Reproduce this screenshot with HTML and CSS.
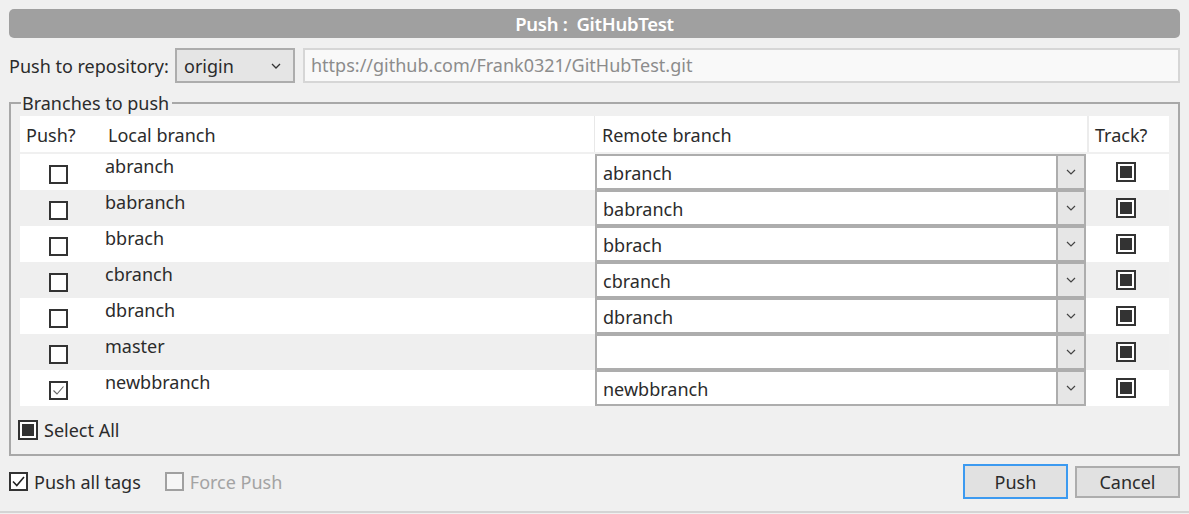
FILE: index.html
```html
<!DOCTYPE html>
<html>
<head>
<meta charset="utf-8">
<link rel="stylesheet" href="styles.css">
</head>
<body>
<div class="window">
  <div class="titlebar">Push :&nbsp; GitHubTest</div>
  <div class="repo-row">
    <span class="label">Push to repository:</span>
    <div class="combo repo-combo">
      <span class="combo-text">origin</span>
      <svg class="chev" width="10" height="6" viewBox="0 0 10 6"><polyline points="1,1 5,5 9,1" fill="none" stroke="#333" stroke-width="1.3"/></svg>
    </div>
    <div class="url">https://github.com/Frank0321/GitHubTest.git</div>
  </div>
  <fieldset class="group">
    <legend>Branches to push</legend>
    <div class="table">
      <div class="row head">
        <div class="cell c-push">Push?</div>
        <div class="cell c-local">Local branch</div>
        <div class="cell c-remote">Remote branch</div>
        <div class="cell c-track">Track?</div>
      </div>
      <div class="row odd">
        <div class="cell c-push"><span class="cb"></span></div>
        <div class="cell c-local">abranch</div>
        <div class="cell c-remote"><div class="rcombo"><span class="rtext">abranch</span><span class="rbtn"><svg width="10" height="6" viewBox="0 0 10 6"><polyline points="1,1 5,5 9,1" fill="none" stroke="#444" stroke-width="1.2"/></svg></span></div></div>
        <div class="cell c-track"><span class="cb ind"></span></div>
      </div>
      <div class="row even">
        <div class="cell c-push"><span class="cb"></span></div>
        <div class="cell c-local">babranch</div>
        <div class="cell c-remote"><div class="rcombo"><span class="rtext">babranch</span><span class="rbtn"><svg width="10" height="6" viewBox="0 0 10 6"><polyline points="1,1 5,5 9,1" fill="none" stroke="#444" stroke-width="1.2"/></svg></span></div></div>
        <div class="cell c-track"><span class="cb ind"></span></div>
      </div>
      <div class="row odd">
        <div class="cell c-push"><span class="cb"></span></div>
        <div class="cell c-local">bbrach</div>
        <div class="cell c-remote"><div class="rcombo"><span class="rtext">bbrach</span><span class="rbtn"><svg width="10" height="6" viewBox="0 0 10 6"><polyline points="1,1 5,5 9,1" fill="none" stroke="#444" stroke-width="1.2"/></svg></span></div></div>
        <div class="cell c-track"><span class="cb ind"></span></div>
      </div>
      <div class="row even">
        <div class="cell c-push"><span class="cb"></span></div>
        <div class="cell c-local">cbranch</div>
        <div class="cell c-remote"><div class="rcombo"><span class="rtext">cbranch</span><span class="rbtn"><svg width="10" height="6" viewBox="0 0 10 6"><polyline points="1,1 5,5 9,1" fill="none" stroke="#444" stroke-width="1.2"/></svg></span></div></div>
        <div class="cell c-track"><span class="cb ind"></span></div>
      </div>
      <div class="row odd">
        <div class="cell c-push"><span class="cb"></span></div>
        <div class="cell c-local">dbranch</div>
        <div class="cell c-remote"><div class="rcombo"><span class="rtext">dbranch</span><span class="rbtn"><svg width="10" height="6" viewBox="0 0 10 6"><polyline points="1,1 5,5 9,1" fill="none" stroke="#444" stroke-width="1.2"/></svg></span></div></div>
        <div class="cell c-track"><span class="cb ind"></span></div>
      </div>
      <div class="row even">
        <div class="cell c-push"><span class="cb"></span></div>
        <div class="cell c-local">master</div>
        <div class="cell c-remote"><div class="rcombo"><span class="rtext"></span><span class="rbtn"><svg width="10" height="6" viewBox="0 0 10 6"><polyline points="1,1 5,5 9,1" fill="none" stroke="#444" stroke-width="1.2"/></svg></span></div></div>
        <div class="cell c-track"><span class="cb ind"></span></div>
      </div>
      <div class="row odd">
        <div class="cell c-push"><span class="cb"><svg width="15" height="15" viewBox="0 0 15 15"><polyline points="2.5,7.5 6,11 12.5,3.5" fill="none" stroke="#666" stroke-width="1.1"/></svg></span></div>
        <div class="cell c-local">newbbranch</div>
        <div class="cell c-remote"><div class="rcombo"><span class="rtext">newbbranch</span><span class="rbtn"><svg width="10" height="6" viewBox="0 0 10 6"><polyline points="1,1 5,5 9,1" fill="none" stroke="#444" stroke-width="1.2"/></svg></span></div></div>
        <div class="cell c-track"><span class="cb ind"></span></div>
      </div>
    </div>
    <div class="select-all"><span class="cb ind"></span><span>Select All</span></div>
  </fieldset>
  <div class="footer">
    <div class="opt"><span class="cb"><svg width="15" height="15" viewBox="0 0 15 15"><polyline points="2,7.5 5.8,11.5 13,3" fill="none" stroke="#222" stroke-width="1.6"/></svg></span><span>Push all tags</span></div>
    <div class="opt disabled"><span class="cb"></span><span>Force Push</span></div>
    <div class="spacer"></div>
    <div class="btn primary">Push</div>
    <div class="btn">Cancel</div>
  </div>
</div>
</body>
</html>
```

FILE: styles.css
```css
html, body {
  margin: 0;
  padding: 0;
  background: #f0f0f0;
}
body {
  font-family: "Noto Sans", "Open Sans", sans-serif;
  font-size: 18px;
  color: #2b2b2b;
}
.window {
  width: 1189px;
  box-sizing: border-box;
  padding: 9px 9px 12px;
  border-bottom: 2px solid #d4d4d4;
}
.titlebar {
  height: 29px;
  background: #a0a0a0;
  border-radius: 5px;
  color: #fff;
  font-weight: 600;
  font-size: 18.5px;
  letter-spacing: -0.3px;
  line-height: 29px;
  text-align: center;
}
.repo-row {
  display: flex;
  align-items: center;
  margin-top: 10px;
  height: 35px;
}
.label {
  width: 166px;
  flex: none;
}
.combo {
  box-sizing: border-box;
  display: flex;
  align-items: center;
  height: 35px;
  border: 2px solid #adadad;
  background: #e5e5e5;
}
.repo-combo {
  width: 120px;
  padding: 0 12px 0 7px;
  justify-content: space-between;
}
.chev { display: block; }
.url {
  box-sizing: border-box;
  flex: 1;
  margin-left: 8px;
  height: 35px;
  border: 2px solid #d6d6d6;
  background: #f9f9f9;
  color: #8c8c8c;
  line-height: 31px;
  padding-left: 6px;
}
.group {
  margin: 9px 0 0;
  border: 2px solid #a8a8a8;
  padding: 0 9px 14px;
  min-width: 0;
}
.group legend {
  padding: 0 3px 0 1px;
  line-height: 22px;
  margin-left: 1px;
}
.table {
  margin-top: 2px;
}
.row {
  display: grid;
  grid-template-columns: 76px 498px 493px 82px;
  height: 36px;
}
.row.head {
  background: #fff;
  margin-bottom: 2px;
}
.row.odd { background: #fff; }
.row.even { background: #efefef; }
.cell {
  display: flex;
  align-items: center;
}
.head .cell { padding-top: 2px; }
.head .c-push { padding-left: 6px; }
.head .c-local { padding-left: 12px; }
.head .c-remote {
  padding-left: 7px;
  border-left: 1px solid #e8e8e8;
}
.head .c-track {
  padding-left: 6px;
  border-left: 2px solid #ececec;
}
.row .c-push { justify-content: center; }
.head .c-push { justify-content: flex-start; }
.row:not(.head) .c-local {
  align-items: flex-start;
  padding-left: 9px;
  line-height: 24px;
}
.row:not(.head) .c-track {
  justify-content: center;
  padding-right: 4px;
}
.cb {
  box-sizing: border-box;
  width: 19px;
  height: 19px;
  border: 2px solid #333;
  background: #fff;
  display: flex;
  align-items: center;
  justify-content: center;
  flex: none;
}
.c-push .cb { margin-top: 4px; margin-left: 1px; }
.cb.ind {
  width: 20px;
  height: 20px;
}
.cb.ind::after {
  content: "";
  width: 12px;
  height: 12px;
  background: #333;
}
.rcombo {
  box-sizing: border-box;
  margin-left: 1px;
  width: 491px;
  height: 36px;
  border: 2px solid #adadad;
  background: #fff;
  display: flex;
}
.rtext {
  flex: 1;
  padding-left: 6px;
  padding-top: 1px;
  line-height: 33px;
}
.rbtn {
  width: 26px;
  background: #e6e6e6;
  border-left: 2px solid #adadad;
  display: flex;
  align-items: center;
  justify-content: center;
}
.select-all {
  display: flex;
  align-items: center;
  gap: 6px;
  margin-top: 14px;
  margin-left: -2px;
  height: 20px;
}
.footer {
  display: flex;
  align-items: center;
  margin-top: 8px;
  height: 35px;
}
.opt {
  display: flex;
  align-items: center;
  gap: 6px;
}
.opt + .opt { margin-left: 24px; }
.opt.disabled { color: #a3a3a3; }
.opt.disabled .cb {
  border-color: #a0a0a0;
  background: #f6f6f6;
}
.spacer { flex: 1; }
.btn {
  box-sizing: border-box;
  width: 105px;
  height: 32px;
  border: 2px solid #adadad;
  background: #e1e1e1;
  display: flex;
  align-items: center;
  justify-content: center;
}
.btn.primary {
  height: 35px;
  border-color: #3c9af0;
  margin-right: 7px;
}
```
